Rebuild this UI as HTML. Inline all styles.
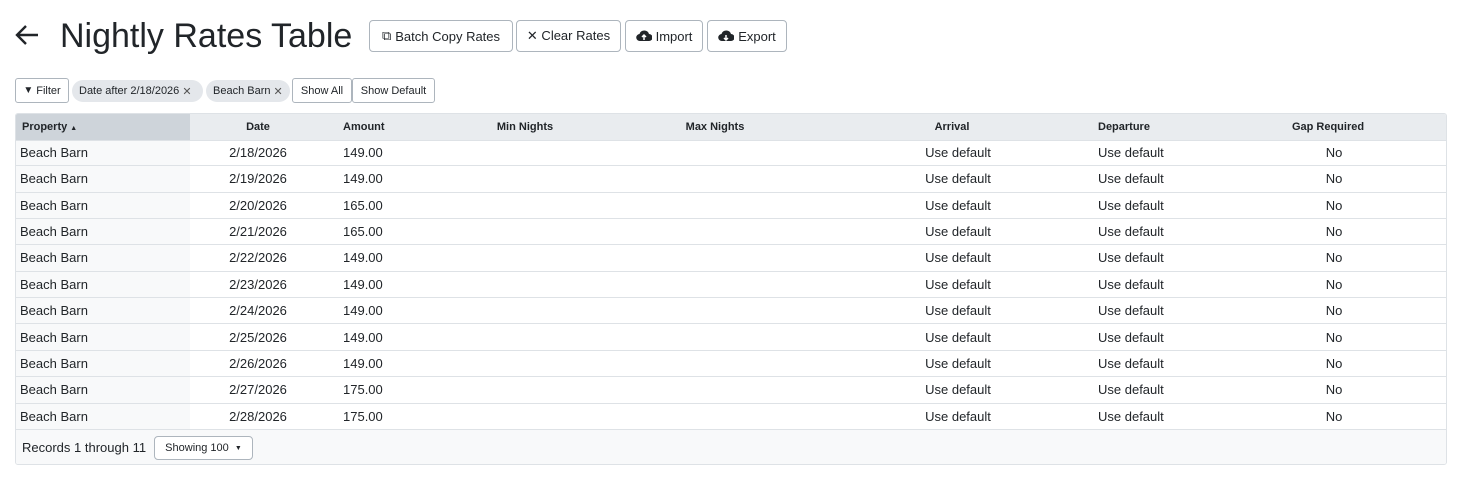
<!DOCTYPE html>
<html><head><meta charset="utf-8"><style>
body{margin:0;width:1463px;height:478px;background:#fff;font-family:"Liberation Sans",sans-serif;color:#212529;position:relative;overflow:hidden}
.a{position:absolute;white-space:nowrap}
.btn{position:absolute;border:1px solid #adb5bd;border-radius:4px;background:#fff;font-size:13px;display:flex;align-items:center;justify-content:center;box-sizing:border-box;color:#212529}
.sb{font-size:11px;border-radius:3px}
.chip{position:absolute;background:#e4e7eb;border-radius:12px;font-size:11px;display:flex;align-items:center;padding:0 7px;box-sizing:border-box;height:22px}
.tbl{position:absolute;left:15px;top:113px;width:1432px;height:352px;border:1px solid #dee2e6;border-radius:3px;box-sizing:border-box;overflow:hidden}
.hd{position:absolute;left:0;top:0;width:100%;height:26px;background:#e9ecef;border-bottom:1px solid #dee2e6;font-size:11px;font-weight:bold}
.hd .a{top:7px}
.row{position:absolute;left:0;width:100%;height:26.3px;border-bottom:1px solid #dee2e6;font-size:13px;box-sizing:border-box}
.row .a{top:5px}
.c{transform:translateX(-50%)}
.foot{position:absolute;left:0;top:316px;width:100%;height:36px;background:#f8f9fa}
</style></head><body>
<svg class="a" style="left:14px;top:24px" width="26" height="22" viewBox="0 0 26 22"><path d="M24 11H3M12 2L3 11l9 9" stroke="#212529" stroke-width="2.4" fill="none"/></svg>
<div class="a" style="left:60px;top:17px;font-size:34px;color:#212529">Nightly Rates Table</div>
<div class="btn" style="left:369px;top:20px;width:144px;height:32px"><span style="font-size:13px;margin-right:4px">⧉</span>Batch Copy Rates</div>
<div class="btn" style="left:516px;top:20px;width:105px;height:32px">✕&nbsp;Clear Rates</div>
<div class="btn" style="left:625px;top:20px;width:78px;height:32px"><svg width="16" height="14" viewBox="0 0 16 14" style="margin-right:4px"><path d="M4 12a3.5 3.5 0 0 1-.5-7A5 5 0 0 1 13 5a3.5 3.5 0 0 1 0 7z" fill="#212529"/><path d="M8 11V6M6 8l2-2 2 2" stroke="#fff" stroke-width="1.5" fill="none"/></svg>Import</div>
<div class="btn" style="left:707px;top:20px;width:80px;height:32px"><svg width="16" height="14" viewBox="0 0 16 14" style="margin-right:4px"><path d="M4 12a3.5 3.5 0 0 1-.5-7A5 5 0 0 1 13 5a3.5 3.5 0 0 1 0 7z" fill="#212529"/><path d="M8 6v5M6 9l2 2 2-2" stroke="#fff" stroke-width="1.5" fill="none"/></svg>Export</div>
<div class="btn sb" style="left:15px;top:78px;width:54px;height:25px"><span style="font-size:10px;margin-right:3px">▼</span>Filter</div>
<div class="chip" style="left:72px;top:80px;width:131px">Date after 2/18/2026&nbsp;<span style="color:#555">✕</span></div>
<div class="chip" style="left:206px;top:80px;width:84px">Beach Barn&nbsp;<span style="color:#555">✕</span></div>
<div class="btn sb" style="left:292px;top:78px;width:60px;height:25px">Show All</div>
<div class="btn sb" style="left:352px;top:78px;width:83px;height:25px">Show Default</div>
<div class="tbl">
<div style="position:absolute;left:0;top:0;width:174px;height:316px;background:#f8f9fa"></div>
<div class="hd"><div style="position:absolute;left:0;top:0;width:174px;height:26px;background:#ced4da"></div>
<div class="a" style="left:6px">Property <span style="font-size:7px">▲</span></div>
<div class="a c" style="left:242px">Date</div>
<div class="a" style="left:327px">Amount</div>
<div class="a c" style="left:509px">Min Nights</div>
<div class="a c" style="left:699px">Max Nights</div>
<div class="a c" style="left:936px">Arrival</div>
<div class="a" style="left:1082px">Departure</div>
<div class="a c" style="left:1312px">Gap Required</div>
</div>
<div id="rows"></div>
<div class="foot"><div class="a" style="left:6px;top:10px;font-size:13px">Records 1 through 11</div>
<div class="btn" style="left:138px;top:6px;width:99px;height:24px;font-size:11px">Showing 100 &nbsp;<span style="font-size:7px">▼</span></div></div>
</div>
<script>
var d=[18,19,20,21,22,23,24,25,26,27,28],am=['149.00','149.00','165.00','165.00','149.00','149.00','149.00','149.00','149.00','175.00','175.00'],h='';
for(var i=0;i<11;i++){h+='<div class="row" style="top:'+(26+i*26.36)+'px"><div class="a" style="left:4px">Beach Barn</div><div class="a c" style="left:242px">2/'+d[i]+'/2026</div><div class="a" style="left:327px">'+am[i]+'</div><div class="a c" style="left:942px">Use default</div><div class="a" style="left:1082px">Use default</div><div class="a c" style="left:1318px">No</div></div>';}
document.getElementById('rows').innerHTML=h;
</script>
</body></html>
